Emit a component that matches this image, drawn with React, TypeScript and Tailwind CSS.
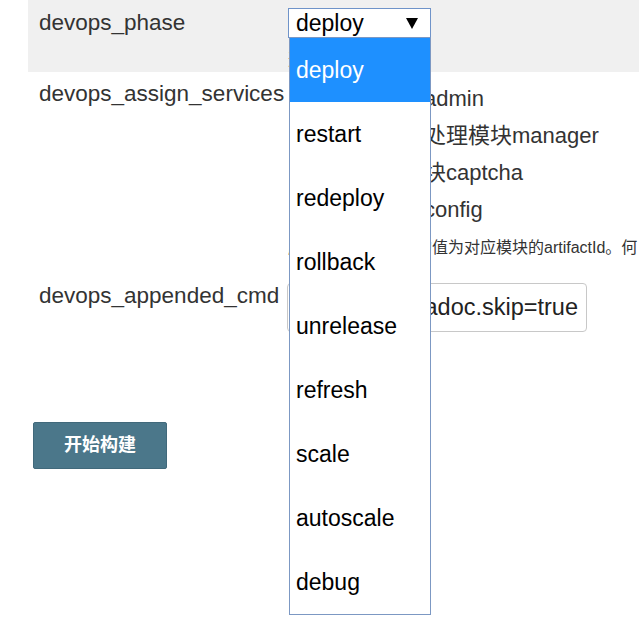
import { useState } from 'react'

const phases = ['deploy', 'restart', 'redeploy', 'rollback', 'unrelease', 'refresh', 'scale', 'autoscale', 'debug']

const services = [
  { id: 'admin', label: '后台管理端admin' },
  { id: 'manager', label: '分布式事务处理模块manager' },
  { id: 'captcha', label: '短信验证模块captcha' },
  { id: 'config', label: '分布式配置config' },
]

export default function App() {
  const [phase, setPhase] = useState('deploy')
  const [open, setOpen] = useState(true)
  const [checked, setChecked] = useState<string[]>([])

  const toggle = (id: string) =>
    setChecked(c => (c.includes(id) ? c.filter(x => x !== id) : [...c, id]))

  return (
    <div
      className="min-h-[630px] overflow-hidden bg-white pl-[28px] text-[#333]"
      style={{ fontFamily: '"Liberation Sans", "Noto Sans CJK SC", sans-serif' }}
    >
      {/* devops_phase */}
      <div className="flex h-[72px] bg-[#f0f0f0]">
        <div className="w-[260px] shrink-0 pl-[11px] pt-[4px] text-[22.5px] leading-[37px]">devops_phase</div>
        <div className="pt-[8px]">
          <div className="relative">
            <button
              type="button"
              onClick={() => setOpen(!open)}
              className="flex h-[30px] w-[143px] items-center justify-between border border-[#6f93c9] bg-white pl-[7px] pr-[12px] text-[23px] leading-none text-black"
            >
              <span>{phase}</span>
              <svg width="12" height="11" viewBox="0 0 12 11">
                <polygon points="0,0 12,0 6,11" fill="#000" />
              </svg>
            </button>
            <div className="mt-[10px] text-[16px] leading-[24px]">选择执行阶段</div>
            {open && (
              <ul className="absolute left-[1px] top-[29px] z-10 w-[142px] border border-[#7c98c3] bg-white">
                {phases.map(p => (
                  <li
                    key={p}
                    onClick={() => {
                      setPhase(p)
                      setOpen(false)
                    }}
                    className={
                      'flex h-[64px] items-center pl-[6px] text-[23px] ' +
                      (p === phase ? 'bg-[#1e90ff] text-white' : 'text-black')
                    }
                  >
                    {p}
                  </li>
                ))}
              </ul>
            )}
          </div>
        </div>
      </div>

      {/* devops_assign_services */}
      <div className="flex pt-[3px]">
        <div className="w-[260px] shrink-0 pl-[11px] text-[22.5px] leading-[37px]">devops_assign_services</div>
        <div className="pt-[5px]">
          {services.map(s => (
            <label key={s.id} className="flex h-[37px] items-center whitespace-nowrap text-[22px]">
              <input
                type="checkbox"
                className="ml-[4px] mr-[8px] h-[14px] w-[14px]"
                checked={checked.includes(s.id)}
                onChange={() => toggle(s.id)}
              />
              {s.label}
            </label>
          ))}
          <div className="mt-[8px] whitespace-nowrap text-[16px] leading-[24px]">
            服务列表，勾选项的值为对应模块的artifactId。何
          </div>
        </div>
      </div>

      {/* devops_appended_cmd */}
      <div className="flex pt-[12px]">
        <div className="w-[260px] shrink-0 pl-[11px] pt-[5px] text-[22.5px] leading-[37px]">devops_appended_cmd</div>
        <div className="pt-[11px]">
          <div className="-ml-[1px] flex h-[49px] w-[300px] items-center justify-end overflow-hidden whitespace-nowrap rounded-[4px] border border-[#c8c8c8] pr-[8px] text-[23.5px] text-[#222]">
            -Dmaven.test.skip=true -Dmaven.javadoc.skip=true
          </div>
        </div>
      </div>

      <div className="pl-[5px] pt-[90px]">
        <button
          type="button"
          className="h-[47px] w-[134px] rounded-[2px] border border-[#41697b] bg-[#4b778a] text-[18px] font-bold text-white"
        >
          开始构建
        </button>
      </div>
    </div>
  )
}
